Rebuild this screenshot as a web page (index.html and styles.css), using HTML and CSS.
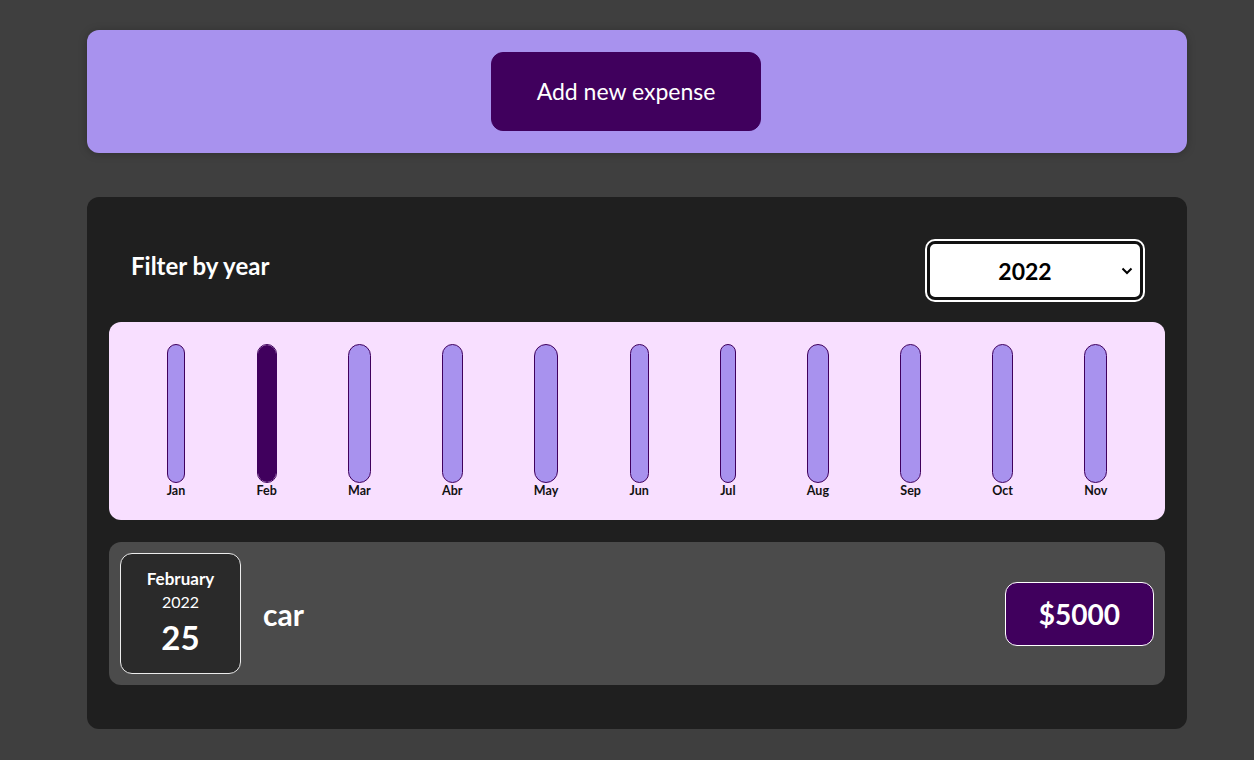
FILE: index.html
```html
<!DOCTYPE html>
<html lang="en">
<head>
  <meta charset="UTF-8">
  <meta name="viewport" content="width=device-width, initial-scale=1.0">
  <title>Expenses</title>
  <link rel="stylesheet" href="styles.css">
</head>
<body>
  <div class="new-expense">
    <button type="button">Add new expense</button>
  </div>

  <div class="expenses">
    <div class="expenses-filter">
      <label for="year">Filter by year</label>
      <div class="select-wrap">
        <select id="year">
          <option>2022</option>
          <option>2021</option>
          <option>2020</option>
          <option>2019</option>
        </select>
        <svg class="chevron" width="12" height="8" viewBox="0 0 12 8"><path d="M1.5 1.5 L6 6 L10.5 1.5" fill="none" stroke="#000" stroke-width="2"/></svg>
      </div>
    </div>

    <div class="chart">
      <div class="chart-bar"><div class="chart-bar__inner"><div class="chart-bar__fill" style="height: 0%"></div></div><div class="chart-bar__label">Jan</div></div>
      <div class="chart-bar"><div class="chart-bar__inner"><div class="chart-bar__fill" style="height: 100%"></div></div><div class="chart-bar__label">Feb</div></div>
      <div class="chart-bar"><div class="chart-bar__inner"><div class="chart-bar__fill" style="height: 0%"></div></div><div class="chart-bar__label">Mar</div></div>
      <div class="chart-bar"><div class="chart-bar__inner"><div class="chart-bar__fill" style="height: 0%"></div></div><div class="chart-bar__label">Abr</div></div>
      <div class="chart-bar"><div class="chart-bar__inner"><div class="chart-bar__fill" style="height: 0%"></div></div><div class="chart-bar__label">May</div></div>
      <div class="chart-bar"><div class="chart-bar__inner"><div class="chart-bar__fill" style="height: 0%"></div></div><div class="chart-bar__label">Jun</div></div>
      <div class="chart-bar"><div class="chart-bar__inner"><div class="chart-bar__fill" style="height: 0%"></div></div><div class="chart-bar__label">Jul</div></div>
      <div class="chart-bar"><div class="chart-bar__inner"><div class="chart-bar__fill" style="height: 0%"></div></div><div class="chart-bar__label">Aug</div></div>
      <div class="chart-bar"><div class="chart-bar__inner"><div class="chart-bar__fill" style="height: 0%"></div></div><div class="chart-bar__label">Sep</div></div>
      <div class="chart-bar"><div class="chart-bar__inner"><div class="chart-bar__fill" style="height: 0%"></div></div><div class="chart-bar__label">Oct</div></div>
      <div class="chart-bar"><div class="chart-bar__inner"><div class="chart-bar__fill" style="height: 0%"></div></div><div class="chart-bar__label">Nov</div></div>
    </div>

    <div class="expense-item">
      <div class="expense-date">
        <div class="expense-date__month">February</div>
        <div class="expense-date__year">2022</div>
        <div class="expense-date__day">25</div>
      </div>
      <div class="expense-item__description">
        <h2>car</h2>
      </div>
      <div class="expense-item__price">$5000</div>
    </div>
  </div>
</body>
</html>
```

FILE: styles.css
```css
/* General Styling */
* {
  box-sizing: border-box;
}

body {
  font-family: 'Lato', 'Noto Sans', sans-serif;
  background: #3f3f3f;
  margin: 0;
  padding: 0 0 0 20px;
}

.new-expense {
  width: 1100px;
  margin: 30px auto 44px;
  padding: 22px;
  background: #a892ee;
  border-radius: 12px;
  text-align: center;
  box-shadow: 0 1px 8px rgba(0, 0, 0, 0.25);
}

.new-expense button {
  font-family: inherit;
  font-size: 23px;
  line-height: 33px;
  color: white;
  background: #40005d;
  border: 1px solid #40005d;
  border-radius: 12px;
  padding: 22px 45px;
  margin-right: 22px;
  cursor: pointer;
}

.expenses {
  width: 1100px;
  margin: 0 auto;
  padding: 22px;
  background: #1f1f1f;
  border-radius: 12px;
}

/* Filter */
.expenses-filter {
  display: flex;
  align-items: center;
  justify-content: space-between;
  margin: 22px 0;
  padding: 0 22px 0 22px;
  color: white;
}

.expenses-filter label {
  font-size: 24px;
  font-weight: bold;
  margin-bottom: 11px;
}

.select-wrap {
  position: relative;
  display: flex;
}

.select-wrap select {
  appearance: none;
  -webkit-appearance: none;
  width: 216px;
  height: 59px;
  font-family: inherit;
  font-size: 23px;
  font-weight: bold;
  text-align: center;
  color: #000;
  background: #fff;
  border: 3px solid #111;
  border-radius: 8px;
  box-shadow: 0 0 0 2px #fff;
  padding: 0 20px 0 0;
}

.chevron {
  position: absolute;
  right: 10px;
  top: 26px;
  pointer-events: none;
}

/* Chart */
.chart {
  display: flex;
  justify-content: space-around;
  height: 198px;
  padding: 22px;
  background: #f8dfff;
  border-radius: 12px;
  text-align: center;
}

.chart-bar {
  display: flex;
  flex-direction: column;
  align-items: center;
  height: 100%;
}

.chart-bar__inner {
  flex: 1;
  width: 100%;
  display: flex;
  flex-direction: column;
  justify-content: flex-end;
  overflow: hidden;
  background: #a892ee;
  border: 1px solid #40005d;
  border-radius: 12px;
}

.chart-bar__fill {
  width: 100%;
  background: #40005d;
}

.chart-bar__label {
  font-size: 12.5px;
  font-weight: bold;
  line-height: 15px;
  color: #111;
}

/* Expense item */
.expense-item {
  display: flex;
  align-items: center;
  margin: 22px 0;
  padding: 11px;
  background: #4b4b4b;
  border-radius: 12px;
}

.expense-date {
  display: flex;
  flex-direction: column;
  align-items: center;
  justify-content: center;
  width: 121px;
  height: 121px;
  color: white;
  background: #2a2a2a;
  border: 1px solid #ececec;
  border-radius: 12px;
}

.expense-date__month {
  font-size: 17px;
  font-weight: bold;
  line-height: 23px;
}

.expense-date__year {
  font-size: 16px;
  line-height: 23px;
}

.expense-date__day {
  font-size: 33px;
  font-weight: bold;
  line-height: 48px;
}

.expense-item__description {
  flex: 1;
  margin: 0 22px;
}

.expense-item__description h2 {
  margin: 0;
  font-size: 30px;
  color: white;
}

.expense-item__price {
  padding: 0 33px;
  height: 64px;
  line-height: 62px;
  font-size: 28px;
  font-weight: bold;
  color: white;
  background: #40005d;
  border: 1px solid white;
  border-radius: 12px;
}
```
